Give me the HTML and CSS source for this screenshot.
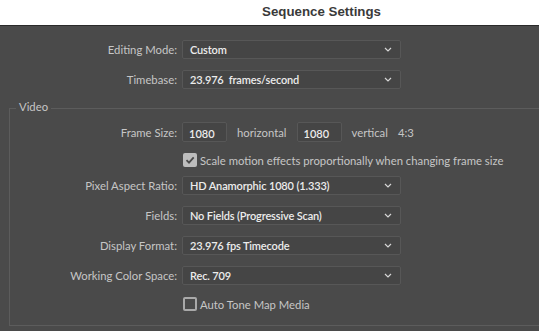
FILE: index.html
```html
<!DOCTYPE html>
<html lang="en">
<head>
  <meta charset="UTF-8">
  <title>Sequence Settings</title>
  <link rel="stylesheet" href="styles.css">
</head>
<body>
  <div class="titlebar">Sequence Settings</div>

  <div class="panel">
    <div class="row">
      <label class="label">Editing Mode:</label>
      <div class="select"><span>Custom</span><svg class="chev" width="8" height="5" viewBox="0 0 8 5"><path d="M1 1 L4 4 L7 1" fill="none" stroke="#d6d6d6" stroke-width="1.2"/></svg></div>
    </div>
    <div class="row">
      <label class="label">Timebase:</label>
      <div class="select"><span>23.976&nbsp; frames/second</span><svg class="chev" width="8" height="5" viewBox="0 0 8 5"><path d="M1 1 L4 4 L7 1" fill="none" stroke="#d6d6d6" stroke-width="1.2"/></svg></div>
    </div>

    <div class="group">
      <span class="legend">Video</span>

      <div class="row tall">
        <label class="label">Frame Size:</label>
        <div class="field">1080</div>
        <span class="unit">horizontal</span>
        <div class="field">1080</div>
        <span class="unit">vertical</span>
        <span class="unit">4:3</span>
      </div>
      <div class="row check-row first-check">
        <span class="label"></span>
        <span class="box checked"><svg width="12" height="12" viewBox="0 0 12 12"><path d="M2.5 6.2 L5 8.7 L9.7 3.3" fill="none" stroke="#4a4a4a" stroke-width="1.8"/></svg></span>
        <span class="check-text">Scale motion effects proportionally when changing frame size</span>
      </div>
      <div class="row after-check">
        <label class="label">Pixel Aspect Ratio:</label>
        <div class="select"><span>HD Anamorphic 1080 (1.333)</span><svg class="chev" width="8" height="5" viewBox="0 0 8 5"><path d="M1 1 L4 4 L7 1" fill="none" stroke="#d6d6d6" stroke-width="1.2"/></svg></div>
      </div>
      <div class="row">
        <label class="label">Fields:</label>
        <div class="select"><span>No Fields (Progressive Scan)</span><svg class="chev" width="8" height="5" viewBox="0 0 8 5"><path d="M1 1 L4 4 L7 1" fill="none" stroke="#d6d6d6" stroke-width="1.2"/></svg></div>
      </div>
      <div class="row">
        <label class="label">Display Format:</label>
        <div class="select"><span>23.976 fps Timecode</span><svg class="chev" width="8" height="5" viewBox="0 0 8 5"><path d="M1 1 L4 4 L7 1" fill="none" stroke="#d6d6d6" stroke-width="1.2"/></svg></div>
      </div>
      <div class="row">
        <label class="label">Working Color Space:</label>
        <div class="select"><span>Rec. 709</span><svg class="chev" width="8" height="5" viewBox="0 0 8 5"><path d="M1 1 L4 4 L7 1" fill="none" stroke="#d6d6d6" stroke-width="1.2"/></svg></div>
      </div>
      <div class="row check-row last-check">
        <span class="label"></span>
        <span class="box"></span>
        <span class="check-text">Auto Tone Map Media</span>
      </div>
    </div>
  </div>
</body>
</html>
```

FILE: styles.css
```css
html, body {
  margin: 0;
  padding: 0;
  height: 100%;
}
body {
  background: #4a4a4a;
  font-family: 'Lato', 'Open Sans', sans-serif;
  font-size: 11.3px;
  overflow: hidden;
}
.titlebar {
  height: 26px;
  line-height: 24px;
  background: #ffffff;
  border-bottom: 1px solid #2a2a2a;
  box-sizing: border-box;
  text-align: center;
  font-family: 'Liberation Sans', Arial, sans-serif;
  font-weight: bold;
  font-size: 13.3px;
  color: #3a3a3a;
  padding-left: 104px;
}
.panel {
  padding-top: 14px;
}
.row {
  display: flex;
  align-items: center;
  height: 19px;
  margin-bottom: 11px;
}
.label {
  width: 177px;
  flex: none;
  text-align: right;
  color: #c6c6c6;
  margin-right: 5px;
}
.group .label {
  width: 167px;
}
.select {
  width: 219px;
  height: 19px;
  box-sizing: border-box;
  background: #454545;
  border: 1px solid #575757;
  border-radius: 2px;
  display: flex;
  align-items: center;
  justify-content: space-between;
  padding: 0 8px 0 7px;
  color: #ececec;
  font-size: 11px;
  font-weight: 600;
  letter-spacing: -0.15px;
}
.chev {
  display: block;
}
.group {
  position: relative;
  margin: 19px 0 0 9px;
  border: 1px solid #5c5c5c;
  border-right: none;
  padding: 13px 0 14px 0;
}
.legend {
  position: absolute;
  left: 6px;
  top: -9px;
  padding: 0 3px;
  background: #4a4a4a;
  color: #c6c6c6;
}
.row.tall {
  height: 20px;
}
.field {
  width: 45px;
  height: 20px;
  box-sizing: border-box;
  background: #454545;
  border: 1px solid #575757;
  border-radius: 2px;
  color: #ececec;
  font-size: 11px;
  font-weight: 600;
  padding: 4px 0 0 6px;
}
.unit {
  color: #c6c6c6;
  margin: 0 10px 0 10px;
}
.unit + .unit {
  margin-left: 0;
}
.check-row {
  height: 14px;
}
.box {
  width: 14px;
  height: 14px;
  box-sizing: border-box;
  border: 2px solid #a9a9a9;
  border-radius: 2px;
  flex: none;
  margin-left: 1px;
  margin-right: 3px;
  display: flex;
  align-items: center;
  justify-content: center;
}
.box.checked {
  background: #bdbdbd;
  border: none;
}
.check-text {
  color: #c6c6c6;
}
.first-check {
  margin-bottom: 9px;
}
.last-check {
  margin-top: 12px;
  margin-bottom: 0;
}
```
